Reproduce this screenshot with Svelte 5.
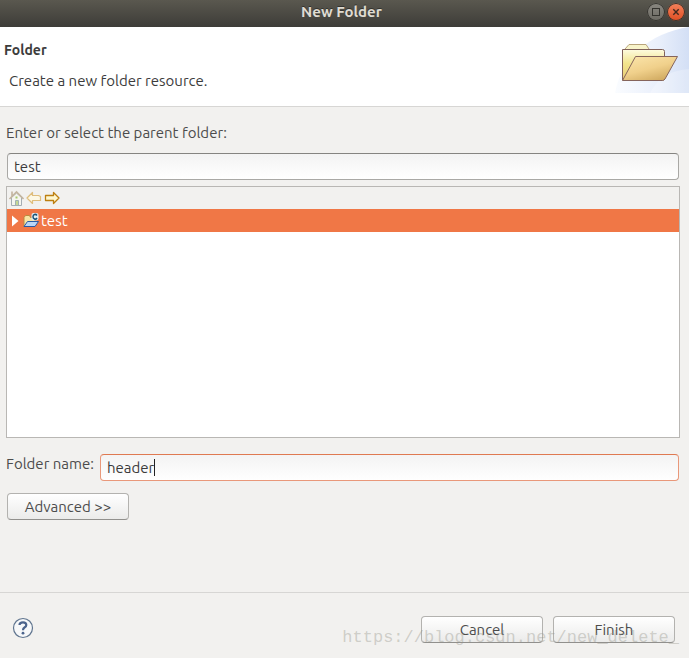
<script>
    let parent = $state("test");
    let name = $state("header");
    let selected = $state(0);

    const folders = ["test"];
</script>

<svelte:head>
    <title>New Folder</title>
</svelte:head>

<div class="dialog">
    <header class="titlebar">
        <h1>New Folder</h1>
        <div class="window-buttons">
            <button class="window-button" type="button" aria-label="Maximize">
                <svg viewBox="0 0 18 18" width="18" height="18">
                    <rect x="5.5" y="5.5" width="7" height="7" fill="none" stroke="#34332e" />
                </svg>
            </button>
            <button class="window-button close" type="button" aria-label="Close">
                <svg viewBox="0 0 18 18" width="18" height="18">
                    <path d="M6.3 6.3l5.4 5.4M11.7 6.3l-5.4 5.4" fill="none" stroke="#42291f" stroke-width="1.4" />
                </svg>
            </button>
        </div>
    </header>

    <section class="banner">
        <div class="banner-text">
            <h2>Folder</h2>
            <p>Create a new folder resource.</p>
        </div>
        <svg class="banner-image" viewBox="0 0 75 66" width="75" height="66" aria-hidden="true">
            <defs>
                <linearGradient id="sky" x1="0" y1="0" x2="1" y2="0">
                    <stop offset="0" stop-color="#fafcff" />
                    <stop offset="0.6" stop-color="#e9effb" />
                    <stop offset="1" stop-color="#d3dff5" />
                </linearGradient>
                <linearGradient id="back" x1="0" y1="0" x2="0" y2="1">
                    <stop offset="0" stop-color="#fdfbe0" />
                    <stop offset="0.45" stop-color="#f2e48e" />
                    <stop offset="1" stop-color="#e8cc74" />
                </linearGradient>
                <linearGradient id="front" x1="0.2" y1="0" x2="0.8" y2="1">
                    <stop offset="0" stop-color="#fae3a8" />
                    <stop offset="0.5" stop-color="#f0d08b" />
                    <stop offset="1" stop-color="#cda65c" />
                </linearGradient>
            </defs>
            <path d="M1 66C7 32 35 6 75 0V66z" fill="url(#sky)" />
            <path d="M36 66C44 50 58 43 75 42V66z" fill="#fff" opacity="0.25" />
            <path d="M11 22l4-4.500H32l3 4.500" fill="#f8f4ca" stroke="#b9a57c" />
            <path d="M8.500 22.500H48.500q2 0 2 2V51.500q0 1.500-2 1.500H8.500z" fill="url(#back)" stroke="#80615a" />
            <path d="M21.500 29.500H63.500L51 52q-1 1.500-2.500 1.500H8.500z" fill="url(#front)" stroke="#85645c" />
        </svg>
    </section>

    <form class="content" onsubmit={(e) => e.preventDefault()}>
        <label class="parent-label" for="parent">Enter or select the parent folder:</label>
        <input id="parent" type="text" bind:value={parent} />

        <div class="tree">
            <div class="toolbar">
                <button type="button" class="tool" aria-label="Home">
                    <svg viewBox="0 0 16 16" width="16" height="16">
                        <path d="M3.500 7.500V15.500H13.500V7.500L8.500 3z" fill="#f5f5ef" stroke="#a4adb3" />
                        <path d="M1.500 9L8.500 2L15.500 9M4 6V1.500" fill="none" stroke="#c3b59f" stroke-width="1.600" />
                        <path d="M7.500 15V10.500H10.500V15" fill="#c4d795" stroke="#a0b2b3" />
                        <path d="M7.500 6.500h2v2h-2z" fill="#a8c96b" />
                    </svg>
                </button>
                <button type="button" class="tool" aria-label="Back">
                    <svg viewBox="0 0 16 16" width="16" height="16">
                        <path d="M1 8L6.500 2.500V5.500H12.500L14.500 6.500V10.500H6.500V13.500z" fill="#fdf8e5" stroke="#dfbd7c" stroke-width="1.200" stroke-linejoin="round" />
                    </svg>
                </button>
                <button type="button" class="tool" aria-label="Forward">
                    <svg viewBox="0 0 16 16" width="16" height="16">
                        <path d="M15 8L9.500 2.500V5.500H1.500V10.500H9.500V13.500z" fill="#fff7cf" stroke="#bd7f10" stroke-width="1.300" stroke-linejoin="round" />
                    </svg>
                </button>
            </div>
            <div class="rows" role="tree" aria-label="Folders">
                {#each folders as folder, i}
                    <button
                        type="button"
                        class="row"
                        class:selected={selected === i}
                        role="treeitem"
                        aria-selected={selected === i}
                        onclick={() => {
                            selected = i;
                            parent = folder;
                        }}
                    >
                        <svg viewBox="0 0 8 12" width="8" height="12">
                            <path d="M1 0.500L7.500 6L1 11.500z" fill="#fff" />
                        </svg>
                        <svg viewBox="0 0 16 16" width="16" height="16">
                            <path d="M1 13.500V4.500L2.500 2.500H6.500L7.500 4.500H12V12z" fill="#f8e4a4" stroke="#b98b3f" />
                            <path d="M1 13.500L4.500 8.500H15.500L12 13.500z" fill="#b9d5f5" stroke="#285aa5" stroke-linejoin="round" />
                            <rect x="8.500" y="0" width="7" height="7.500" rx="2" fill="#e4eff4" />
                            <path d="M14 2.500q-1-1.500-2.500-1T10 3.700t1.500 2.300t2.500-1" fill="none" stroke="#1b5375" stroke-width="1.500" />
                        </svg>
                        <span>{folder}</span>
                    </button>
                {/each}
            </div>
        </div>

        <div class="name-row">
            <label for="name">Folder name:</label>
            <div class="name-field">
                <input id="name" class="focused" type="text" bind:value={name} />
                <span class="caret"></span>
            </div>
        </div>

        <button class="button" type="button">Advanced &gt;&gt;</button>
    </form>

    <footer class="footer">
        <button class="help" type="button" aria-label="Help">
            <svg viewBox="0 0 22 22" width="22" height="22">
                <circle cx="11" cy="11" r="9.500" fill="#f7f8f9" stroke="#60758f" stroke-width="1.200" />
                <path d="M7.500 8Q7.600 5.300 11 5.300Q14.300 5.300 14.300 8Q14.300 9.500 12.500 10.500Q11 11.400 11 13.200" fill="none" stroke="#4c648c" stroke-width="2.200" />
                <circle cx="11" cy="16.200" r="1.400" fill="#4c648c" />
            </svg>
        </button>
        <div class="actions">
            <button class="button" type="button">Cancel</button>
            <button class="button" type="button">Finish</button>
        </div>
        <span class="watermark">https://blog.csdn.net/new_delete_</span>
    </footer>
</div>

<style>
    :global(body) {
        margin: 0;
        background: #f2f1ef;
    }

    .dialog {
        box-sizing: border-box;
        display: flex;
        flex-direction: column;
        min-height: 100vh;
        background: #f2f1ef;
        color: #4c4c4c;
        font-family: Ubuntu, "Noto Sans", "Open Sans", sans-serif;
        font-size: 15px;
        line-height: 20px;
    }

    button,
    input {
        box-sizing: border-box;
        margin: 0;
        font: inherit;
        color: inherit;
    }

    .titlebar {
        position: relative;
        display: flex;
        align-items: center;
        justify-content: center;
        height: 27px;
        background: linear-gradient(#5a584f, #3d3c38);
    }

    h1 {
        margin: 0;
        padding-bottom: 4px;
        padding-right: 6px;
        color: #dfdbd2;
        font-size: 15px;
        font-weight: 700;
        text-shadow: 0 -1px #33322e;
    }

    .window-buttons {
        position: absolute;
        top: 3px;
        right: 4px;
        display: flex;
        gap: 2px;
    }

    .window-button {
        display: flex;
        padding: 0;
        border: 0;
        border-radius: 50%;
        background: linear-gradient(#8a8881, #6b6962);
        box-shadow: inset 0 0 0 1px #35342f;
    }

    .close {
        background: linear-gradient(#f5835d, #df4d22);
    }

    .banner {
        display: flex;
        justify-content: space-between;
        height: 79px;
        border-bottom: 1px solid #d7d6d4;
        background: #fff;
        color: #3c3c3c;
    }

    .banner-text {
        padding: 13px 4px;
    }

    h2 {
        margin: 0;
        font-size: 14px;
        font-weight: 700;
    }

    p {
        margin: 11px 5px 0;
    }

    .content {
        display: flex;
        flex: 1;
        flex-direction: column;
        align-items: stretch;
        padding: 16px 10px 72px 6px;
    }

    .parent-label {
        margin-bottom: 10px;
    }

    input {
        width: 100%;
        height: 27px;
        padding: 0 6px;
        border: 1px solid #a9a8a5;
        border-top-color: #858481;
        border-radius: 4px;
        outline: 0;
        background: linear-gradient(#f3f3f3, #fff);
        color: #3c3c3c;
    }

    #parent {
        width: auto;
        margin-left: 1px;
    }

    .tree {
        display: flex;
        flex: 1;
        flex-direction: column;
        margin-top: 6px;
        margin-right: -1px;
        border: 1px solid #b9b7b4;
        background: #fff;
    }

    .toolbar {
        display: flex;
        gap: 2px;
        padding: 3px 1px;
        background: #f2f1ef;
    }

    .tool {
        display: flex;
        padding: 0;
        border: 0;
        background: none;
    }

    .row {
        display: flex;
        align-items: center;
        width: 100%;
        height: 23px;
        padding: 0 4px;
        border: 0;
        background: none;
        text-align: left;
    }

    .row span {
        margin-left: 2px;
    }

    .row svg + svg {
        margin-left: 4px;
    }

    .selected {
        background: #f07746;
        color: #fff;
    }

    .name-row {
        display: flex;
        gap: 6px;
        margin-top: 16px;
    }

    .name-field {
        position: relative;
        flex: 1;
    }

    .name-field input {
        display: block;
    }

    .focused {
        border-color: #e9987a;
        border-top-color: #df7951;
    }

    .caret {
        position: absolute;
        top: 5px;
        left: 54px;
        width: 1px;
        height: 17px;
        background: #222;
    }

    .button {
        width: 122px;
        height: 27px;
        padding: 0;
        border: 1px solid #b3b2af;
        border-bottom-color: #91908d;
        border-radius: 4px;
        background: linear-gradient(#fff, #ebebea);
    }

    .content .button {
        margin-top: 12px;
        margin-left: 1px;
    }

    .footer {
        position: relative;
        display: flex;
        align-items: flex-start;
        justify-content: space-between;
        padding: 23px 14px 15px 12px;
        border-top: 1px solid #d7d6d4;
    }

    .help {
        display: flex;
        padding: 1px 0;
        border: 0;
        background: none;
    }

    .actions {
        display: flex;
        gap: 10px;
    }

    .watermark {
        position: absolute;
        right: 10px;
        bottom: 10px;
        color: rgba(150, 150, 140, 0.4);
        font-family: "Liberation Mono", monospace;
        font-size: 17px;
        pointer-events: none;
    }
</style>
